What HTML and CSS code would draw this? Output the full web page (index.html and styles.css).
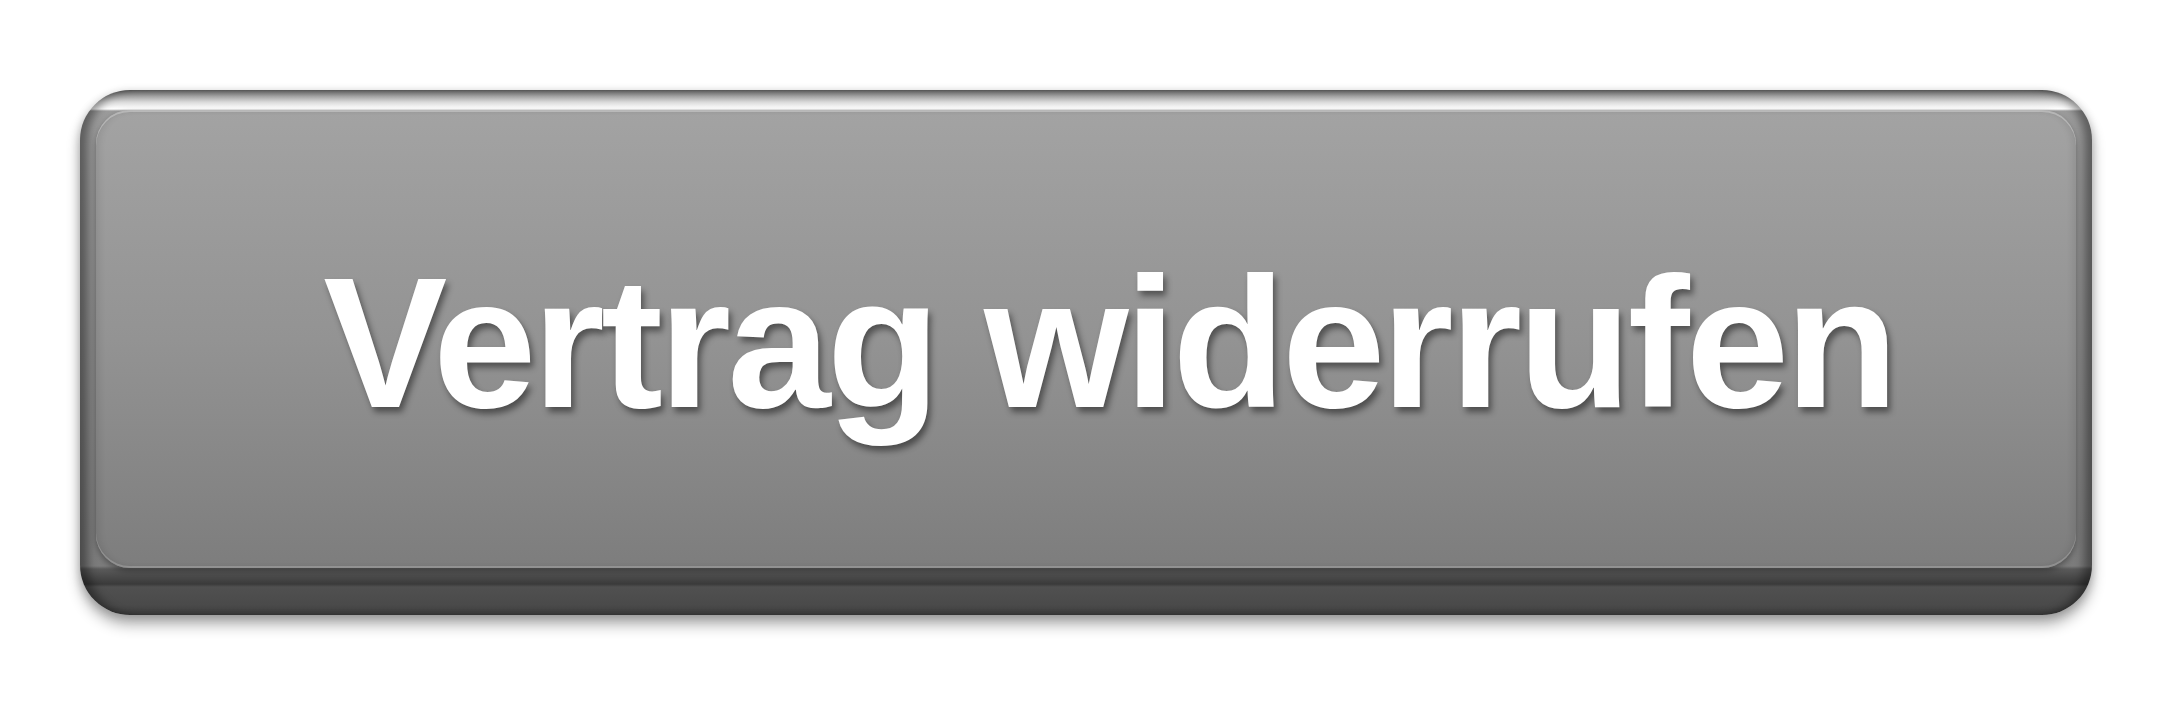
FILE: index.html
```html
<html lang="de">
<head>
    <meta charset="UTF-8">
    <title>Vertrag widerrufen</title>
    <link rel="stylesheet" href="styles.css">
</head>
<body>
    <div class="btn">
        <div class="face">
            <span class="label">Vertrag widerrufen</span>
        </div>
    </div>
</body>
</html>
```

FILE: styles.css
```css
* {
    box-sizing: border-box;
}

body {
    margin: 0;
    padding: 90px 80px;
    background: #ffffff;
    font-family: "Liberation Sans", Arial, sans-serif;
}

.btn {
    width: 2012px;
    height: 525px;
    padding: 20px 16px 47px 16px;
    display: flex;
    border-radius: 50px;
    background: linear-gradient(to bottom,
        #636363 0px,
        #8c8c8c 4px,
        #d9d9d9 12px,
        #f6f6f6 17px,
        #ffffff 19px,
        #9c9c9c 21px,
        #7c7c7c 476px,
        #5a5a5a 479px,
        #474747 488px,
        #3a3a3a 494px,
        #505050 497px,
        #4a4a4a 515px,
        #3c3c3c 525px);
    box-shadow:
        inset 12px 0 10px -4px rgba(0, 0, 0, 0.4),
        inset -12px 0 10px -4px rgba(0, 0, 0, 0.4),
        0 10px 14px rgba(0, 0, 0, 0.3),
        0 2px 10px rgba(0, 0, 0, 0.2);
}

.face {
    flex: 1;
    display: flex;
    align-items: center;
    justify-content: center;
    padding: 7px 0 0 46px;
    border-radius: 34px;
    background: linear-gradient(to bottom, #a3a3a3 0%, #939393 50%, #7d7d7d 100%);
    box-shadow:
        inset 0 2px 0 rgba(255, 255, 255, 0.3),
        inset 0 -2px 0 rgba(255, 255, 255, 0.2),
        inset 4px 0 6px rgba(0, 0, 0, 0.08),
        inset -4px 0 6px rgba(0, 0, 0, 0.08),
        0 3px 6px rgba(0, 0, 0, 0.35);
}

.label {
    color: #ffffff;
    font-size: 186px;
    font-weight: bold;
    letter-spacing: -4px;
    white-space: nowrap;
    text-shadow: 3px 5px 6px rgba(0, 0, 0, 0.45);
}
```
